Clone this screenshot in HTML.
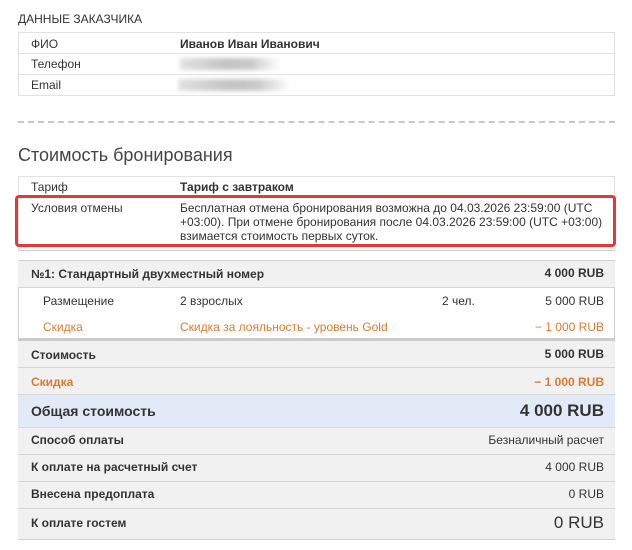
<!DOCTYPE html>
<html><head><meta charset="utf-8"><style>
*{margin:0;padding:0;box-sizing:border-box}
body{width:632px;height:550px;background:#fff;font-family:"Liberation Sans",Arial,sans-serif;font-size:12px;color:#333;position:relative;overflow:hidden}
.a{position:absolute;white-space:nowrap}
.b{font-weight:bold}
.r{text-align:right}
.or{color:#e07a2e}
.blur{position:absolute;height:12px;background:linear-gradient(90deg,#e2e2e2,#c4c4c4 45%,#c8c8c8 70%,#fff);filter:blur(2px)}
.box{position:absolute;border:1px solid #e2e2e2}
.row{position:absolute;left:18px;width:597px;border-bottom:1px solid #d6d6d6;background:#f1f1f1}
</style></head><body>
<div class="a" style="left:18px;top:12px;font-size:12px">ДАННЫЕ ЗАКАЗЧИКА</div>
<div class="box" style="left:18px;top:32px;width:597px;height:64px"></div>
<div class="a" style="left:18px;top:53px;width:597px;border-top:1px solid #e2e2e2"></div>
<div class="a" style="left:18px;top:74px;width:597px;border-top:1px solid #e2e2e2"></div>
<div class="a" style="left:31px;top:37px">ФИО</div>
<div class="a b" style="left:180px;top:37px">Иванов Иван Иванович</div>
<div class="a" style="left:31px;top:57px">Телефон</div>
<div class="blur" style="left:180px;top:58px;width:100px"></div>
<div class="a" style="left:31px;top:78px">Email</div>
<div class="blur" style="left:178px;top:79px;width:112px"></div>
<div class="a" style="left:18px;top:121px;width:597px;border-top:2px dashed #c8c8c8"></div>
<div class="a" style="left:18px;top:145px;font-size:18px;color:#444">Стоимость бронирования</div>
<div class="box" style="left:18px;top:176px;width:597px;height:75px;border-bottom:1px solid #ccc"></div>
<div class="a" style="left:31px;top:180px">Тариф</div>
<div class="a b" style="left:180px;top:180px">Тариф с завтраком</div>
<div class="a" style="left:15px;top:195px;width:601px;height:52px;border:3px solid #e53935;border-radius:4px"></div>
<div class="a" style="left:31px;top:201px">Условия отмены</div>
<div class="a" style="left:180px;top:201px;line-height:14px;white-space:normal;width:430px">Бесплатная отмена бронирования возможна до 04.03.2026 23:59:00 (UTC +03:00). При отмене бронирования после 04.03.2026 23:59:00 (UTC +03:00) взимается стоимость первых суток.</div>

<div class="a" style="left:18px;top:260px;width:597px;height:280px;border:1px solid #d0d0d0"></div>
<div class="row" style="top:260px;height:28px;border-top:1px solid #d0d0d0"></div>
<div class="a b" style="left:31px;top:267px">№1: Стандартный двухместный номер</div>
<div class="a b r" style="right:28px;top:266px">4 000 RUB</div>
<div class="a" style="left:18px;top:288px;width:597px;height:53px;background:#fff;border-left:1px solid #d0d0d0;border-right:1px solid #d0d0d0;border-bottom:3px solid #ccc"></div>
<div class="a" style="left:43px;top:294px">Размещение</div>
<div class="a" style="left:180px;top:294px">2 взрослых</div>
<div class="a" style="left:442px;top:294px">2 чел.</div>
<div class="a r" style="right:28px;top:294px">5 000 RUB</div>
<div class="a or" style="left:43px;top:320px">Скидка</div>
<div class="a or" style="left:180px;top:320px">Скидка за лояльность - уровень Gold</div>
<div class="a r or" style="right:28px;top:320px">− 1 000 RUB</div>
<div class="row" style="top:341px;height:27px"></div>
<div class="a b" style="left:31px;top:348px">Стоимость</div>
<div class="a b r" style="right:28px;top:347px">5 000 RUB</div>
<div class="row" style="top:368px;height:27px"></div>
<div class="a b or" style="left:31px;top:375px">Скидка</div>
<div class="a b r or" style="right:28px;top:375px">− 1 000 RUB</div>
<div class="row" style="top:395px;height:33px;background:#e1eaf6"></div>
<div class="a b" style="left:31px;top:403px;font-size:14px">Общая стоимость</div>
<div class="a b r" style="right:28px;top:401px;font-size:17px">4 000 RUB</div>
<div class="row" style="top:428px;height:27px"></div>
<div class="a b" style="left:31px;top:433px">Способ оплаты</div>
<div class="a r" style="right:28px;top:433px">Безналичный расчет</div>
<div class="row" style="top:455px;height:27px"></div>
<div class="a b" style="left:31px;top:460px">К оплате на расчетный счет</div>
<div class="a r" style="right:28px;top:460px">4 000 RUB</div>
<div class="row" style="top:482px;height:27px"></div>
<div class="a b" style="left:31px;top:487px">Внесена предоплата</div>
<div class="a r" style="right:28px;top:487px">0 RUB</div>
<div class="row" style="top:509px;height:31px;border-bottom:1px solid #d0d0d0"></div>
<div class="a b" style="left:31px;top:516px">К оплате гостем</div>
<div class="a r" style="right:28px;top:513px;font-size:17px">0 RUB</div>
</body></html>
